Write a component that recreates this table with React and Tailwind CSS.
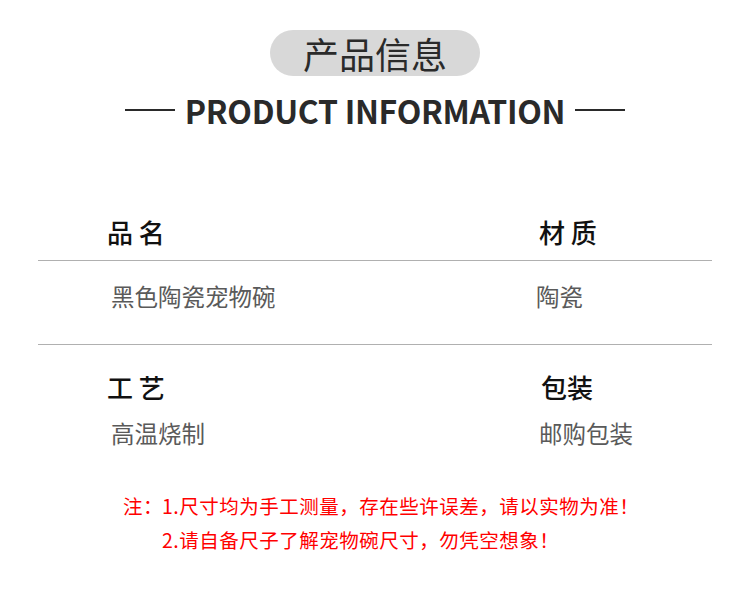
const cjk = { fontFamily: '"Noto Sans CJK SC", "Noto Sans", sans-serif' };

const rows = [
  { l: "品 名", lv: "黑色陶瓷宠物碗", r: "材 质", rv: "陶瓷" },
  { l: "工 艺", lv: "高温烧制", r: "包装", rv: "邮购包装" },
];

export default function App() {
  return (
    <div className="w-[750px] h-[595px] bg-white overflow-hidden" style={cjk}>
      <div className="pt-[30px]">
        <div className="mx-auto w-[210px] h-[46px] rounded-full bg-[#d8d8d8] flex items-center justify-center text-[36px] leading-none text-[#2a2a2a]">
          产品信息
        </div>
      </div>

      <div className="mt-[18px] flex items-center justify-center gap-[10px]">
        <div className="w-[50px] h-[2px] bg-[#2a2a2a]" />
        <div className="text-[32px] leading-none font-bold text-[#2a2a2a] tracking-[-0.3px]">
          PRODUCT INFORMATION
        </div>
        <div className="w-[50px] h-[2px] bg-[#2a2a2a]" />
      </div>

      <div className="mt-[93px] text-[26px] leading-none font-medium text-[#111]">
        <div className="flex">
          <div className="w-[539px] pl-[107px]">{rows[0].l}</div>
          <div className="flex-1">{rows[0].r}</div>
        </div>
      </div>
      <div className="mt-[15px] mx-[38px] h-px bg-[#b0b0b0]" />
      <div className="mt-[24px] text-[23.5px] leading-none text-[#5a5a5a]">
        <div className="flex">
          <div className="w-[536px] pl-[111px]">{rows[0].lv}</div>
          <div className="flex-1">{rows[0].rv}</div>
        </div>
      </div>
      <div className="mt-[35px] mx-[38px] h-px bg-[#b0b0b0]" />

      <div className="mt-[29px] text-[26px] leading-none font-medium text-[#111]">
        <div className="flex">
          <div className="w-[541px] pl-[107px]">{rows[1].l}</div>
          <div className="flex-1">{rows[1].r}</div>
        </div>
      </div>
      <div className="mt-[22px] text-[23.5px] leading-none text-[#5a5a5a]">
        <div className="flex">
          <div className="w-[539px] pl-[111px]">{rows[1].lv}</div>
          <div className="flex-1">{rows[1].rv}</div>
        </div>
      </div>

      <div className="mt-[51px] pl-[123px] text-[19.5px] leading-none tracking-[0.5px] text-[#ff0000]">
        <div className="flex">
          <span className="w-[39px]">注：</span>
          <span>1.尺寸均为手工测量，存在些许误差，请以实物为准！</span>
        </div>
        <div className="mt-[14px] pl-[39px]">2.请自备尺子了解宠物碗尺寸，勿凭空想象！</div>
      </div>
    </div>
  );
}
